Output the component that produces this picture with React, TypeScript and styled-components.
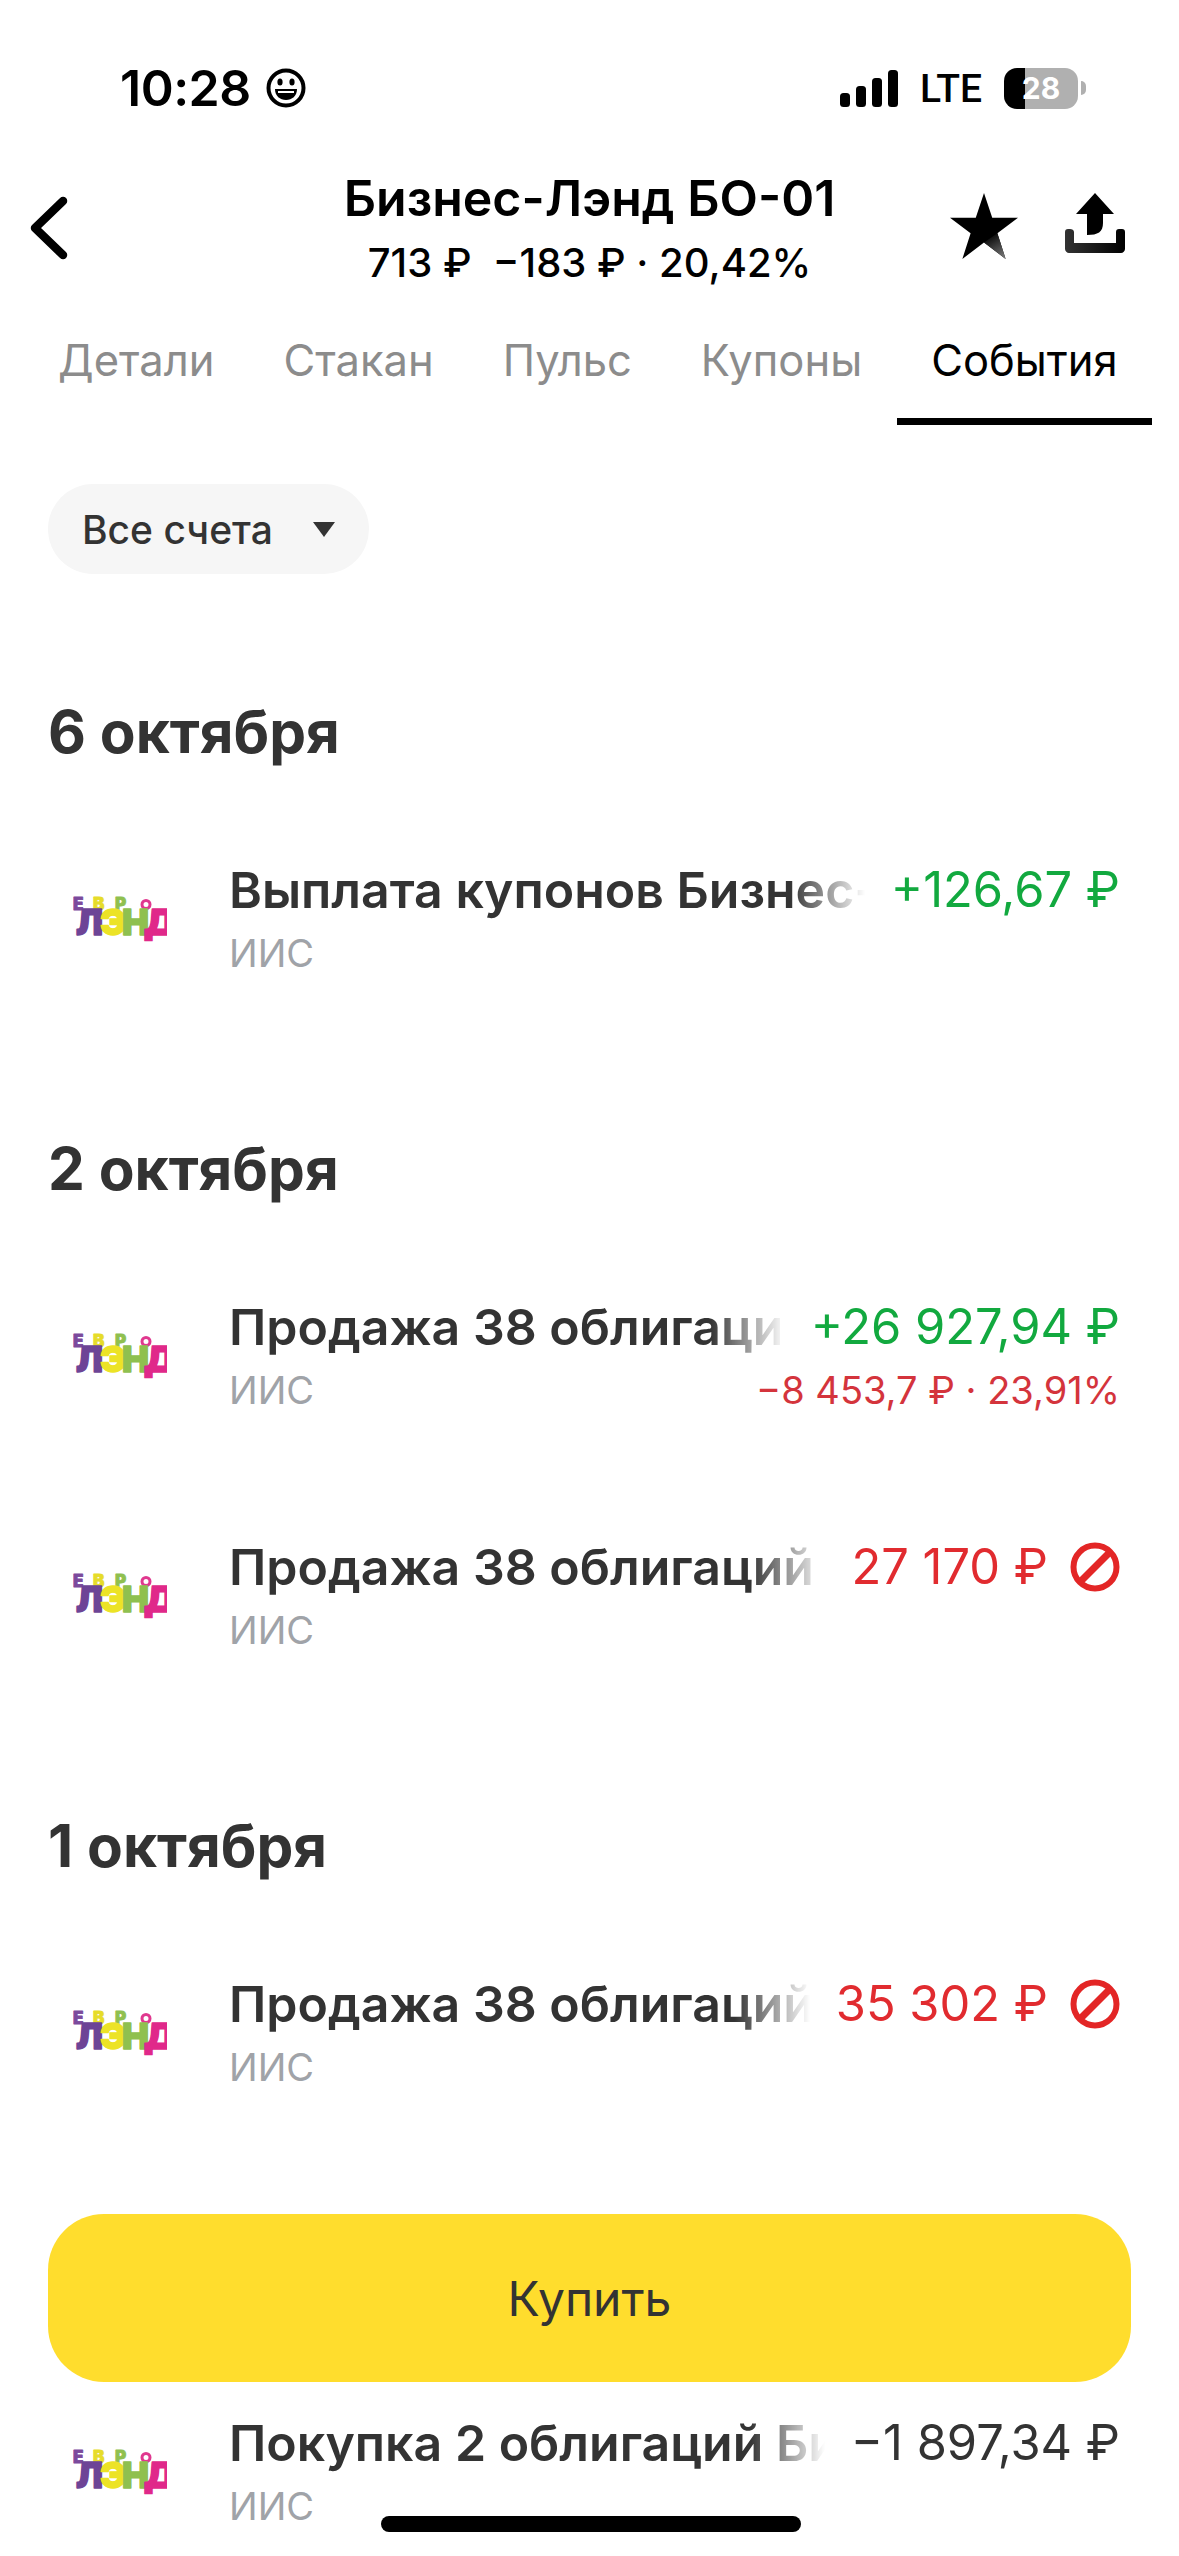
import styled, { createGlobalStyle } from "styled-components";

const GlobalStyle = createGlobalStyle`
  html, body {
    margin: 0;
    padding: 0;
    background: #fff;
  }
  body {
    font-family: Inter, "Noto Sans", "Liberation Sans", sans-serif;
    color: #333;
  }
`;

const Page = styled.div`
  position: relative;
  width: 1179px;
  height: 2556px;
  overflow: hidden;
  background: #fff;
`;

const StatusBar = styled.div`
  display: flex;
  justify-content: space-between;
  align-items: center;
  height: 56px;
  padding: 60px 93px 44px 120px;
  color: #000;
`;

const StatusLeft = styled.div`
  display: flex;
  align-items: center;
  gap: 15px;
`;

const Time = styled.span`
  font-size: 50px;
  line-height: 56px;
  font-weight: 600;
  letter-spacing: -0.5px;
`;

const StatusRight = styled.div`
  display: flex;
  align-items: center;
`;

const Lte = styled.span`
  margin: 2px 22px 0 22px;
  font-family: "Roboto", Inter, sans-serif;
  font-size: 39px;
  line-height: 56px;
  font-weight: 500;
`;

const Battery = styled.div`
  position: relative;
  width: 74px;
  height: 41px;
  border-radius: 13px;
  overflow: hidden;
  background: linear-gradient(to right, #000 0 28%, #b0b0b0 28% 100%);
  color: #fff;
  font-size: 30px;
  line-height: 41px;
  font-weight: 700;
  text-align: center;
`;

const BatteryTip = styled.div`
  width: 5px;
  height: 14px;
  margin-left: 3px;
  border-radius: 0 7px 7px 0;
  background: #b0b0b0;
`;

const Header = styled.header`
  display: grid;
  grid-template-columns: 1fr auto 1fr;
  height: 170px;
  color: #000;
`;

const BackSlot = styled.div`
  padding: 36px 0 0 27px;
`;

const TitleBlock = styled.div`
  display: flex;
  flex-direction: column;
  align-items: center;
  padding-top: 6px;
`;

const Title = styled.div`
  font-size: 50px;
  line-height: 64px;
  font-weight: 600;
  white-space: nowrap;
`;

const Subtitle = styled.div`
  margin-top: 8px;
  font-size: 40px;
  line-height: 50px;
  font-weight: 500;
  white-space: pre;
`;

const HeaderActions = styled.div`
  display: flex;
  justify-content: flex-end;
  gap: 47px;
  padding: 33px 54px 0 0;
`;

const Tabs = styled.nav`
  display: flex;
  padding-left: 23.5px;
`;

const Tab = styled.div<{ $active?: boolean }>`
  padding: 0 34.5px 28px;
  font-size: 43.5px;
  line-height: 60px;
  white-space: nowrap;
  color: ${(p) => (p.$active ? "#000" : "#8c8c8c")};
  border-bottom: 7px solid ${(p) => (p.$active ? "#000" : "transparent")};
`;

const FilterPill = styled.div`
  display: inline-flex;
  align-items: center;
  gap: 40px;
  height: 90px;
  margin: 59px 0 0 48px;
  padding: 0 34px;
  border-radius: 45px;
  background: #f6f6f6;
  font-size: 39px;
  font-weight: 500;
`;

const Caret = styled.span`
  width: 0;
  height: 0;
  border-left: 11px solid transparent;
  border-right: 11px solid transparent;
  border-top: 15px solid #333;
`;

const Section = styled.section<{ $top: number }>`
  padding-top: ${(p) => p.$top}px;
`;

const DateHeading = styled.h2`
  margin: 0 0 94px 48px;
  font-size: 58.5px;
  line-height: 68px;
  font-weight: 700;
  color: #333;
`;

const Row = styled.div`
  display: flex;
  height: 240px;
  padding: 0 59px 0 73px;
  box-sizing: border-box;
`;

const LogoSlot = styled.div`
  flex: none;
  width: 94px;
  margin-right: 62px;
  padding-top: 32px;
`;

const RowBody = styled.div`
  flex: 1;
  min-width: 0;
`;

const TopLine = styled.div`
  display: flex;
  align-items: center;
  gap: 26px;
  height: 60px;
`;

const RowTitle = styled.div`
  flex: 1;
  min-width: 0;
  overflow: hidden;
  white-space: nowrap;
  font-size: 50px;
  line-height: 60px;
  font-weight: 600;
  color: #333;
  mask-image: linear-gradient(to right, #000 calc(100% - 75px), transparent);
`;

const Amount = styled.div<{ $color: string }>`
  flex: none;
  display: flex;
  align-items: center;
  gap: 22px;
  font-size: 48.8px;
  line-height: 60px;
  white-space: nowrap;
  color: ${(p) => p.$color};
`;

const BottomLine = styled.div`
  display: flex;
  justify-content: space-between;
  align-items: center;
  height: 50px;
  margin-top: 8px;
`;

const Account = styled.span`
  font-size: 38px;
  line-height: 50px;
  color: #a0a3a8;
`;

const SubAmount = styled.span`
  font-size: 38px;
  line-height: 50px;
  white-space: nowrap;
  color: #d4343c;
`;

const BuyButton = styled.button`
  position: absolute;
  left: 48px;
  top: 2214px;
  width: 1083px;
  height: 168px;
  border: 0;
  border-radius: 56px;
  background: #ffdd2d;
  font: 400 48px Inter, sans-serif;
  color: #333;
`;

const HomeIndicator = styled.div`
  position: absolute;
  left: 381px;
  bottom: 24px;
  width: 420px;
  height: 16px;
  border-radius: 8px;
  background: #000;
`;

const Smiley = () => (
  <svg width="40" height="40" viewBox="0 0 40 40">
    <circle cx="20" cy="20" r="17.5" fill="none" stroke="#000" strokeWidth="4" />
    <ellipse cx="14" cy="14" rx="2.6" ry="3.6" fill="#000" />
    <ellipse cx="26" cy="14" rx="2.6" ry="3.6" fill="#000" />
    <path d="M9 21h22c0 7-5 11-11 11S9 28 9 21z" fill="#000" />
    <path d="M12 23h16v2H12z" fill="#fff" />
  </svg>
);

const SignalBars = () => (
  <svg width="58" height="37" viewBox="0 0 58 37" fill="#000">
    <rect x="0" y="23" width="10" height="14" rx="3.5" />
    <rect x="16" y="16" width="10" height="21" rx="3.5" />
    <rect x="32" y="8" width="10" height="29" rx="3.5" />
    <rect x="48" y="0" width="10" height="37" rx="3.5" />
  </svg>
);

const BackIcon = () => (
  <svg width="44" height="64" viewBox="0 0 44 64">
    <path d="M36 5 8 32l28 27" fill="none" stroke="#000" strokeWidth="8.5" strokeLinecap="round" strokeLinejoin="round" />
  </svg>
);

const StarIcon = () => (
  <svg width="68" height="66" viewBox="0 0 66 64">
    <defs>
      <linearGradient id="starShade" x1="0.3" y1="0" x2="0.8" y2="1">
        <stop offset="0" stopColor="#000" />
        <stop offset="1" stopColor="#777" />
      </linearGradient>
    </defs>
    <path d="M33 0l8 24h25L46 39l8 25-21-16-21 16 8-25L0 24h25z" fill="#000" />
    <path d="M46 39l8 25-21-16z" fill="url(#starShade)" />
  </svg>
);

const ShareIcon = () => (
  <svg width="60" height="60" viewBox="0 0 60 60">
    <defs>
      <linearGradient id="trayShade" x1="0" y1="0" x2="1" y2="0">
        <stop offset="0" stopColor="#333" />
        <stop offset="1" stopColor="#000" />
      </linearGradient>
    </defs>
    <path d="M30 0l19 21H38v9c0 9-5 12-16 12V21H11z" fill="#000" />
    <path d="M0 39c0-2 1-3 3-3h2c2 0 4 1 4 3v11h42V39c0-2 1-3 3-3h3c2 0 3 1 3 3v17c0 2-2 4-4 4H4c-2 0-4-2-4-4z" fill="url(#trayShade)" />
  </svg>
);

const BanIcon = () => (
  <svg width="50" height="50" viewBox="0 0 50 50" fill="none" stroke="#e32626" strokeWidth="6">
    <circle cx="25" cy="25" r="21.5" />
    <path d="M10 40 40 10" strokeWidth="7" />
  </svg>
);

const logoLetter = {
  fontFamily: "Inter, sans-serif",
  fontWeight: 900,
  lengthAdjust: "spacingAndGlyphs",
  strokeLinejoin: "round",
} as const;

// Евро-Лэнд logo, letters kept as text
const BrandLogo = () => (
  <svg width="94" height="54" viewBox="0 -6 94 54">
    <g fontSize="17" strokeWidth="0.8" {...logoLetter}>
      <text x="0" y="12" fill="#7b4a9c" stroke="#7b4a9c" textLength="9">Е</text>
      <text x="20" y="12" fill="#e6dc2a" stroke="#e6dc2a" textLength="9">В</text>
      <text x="42" y="12" fill="#8fc04f" stroke="#8fc04f" textLength="9">Р</text>
    </g>
    <circle cx="73" cy="6.5" r="4" fill="none" stroke="#e0388f" strokeWidth="3" />
    <g fontSize="36" strokeWidth="1.4" {...logoLetter}>
      <text x="3" y="36.5" fill="#6d4496" stroke="#6d4496" textLength="18">Л</text>
      <text x="27" y="36.5" fill="#ece326" stroke="#ece326" textLength="17">Э</text>
      <text x="49" y="36.5" fill="#8fc04f" stroke="#8fc04f" textLength="17">Н</text>
      <text x="71" y="36.5" fill="#e0288a" stroke="#e0288a" textLength="22">Д</text>
    </g>
  </svg>
);

const GREEN = "#12a93f";
const RED = "#e12b2f";
const DARK = "#333";

type EventItem = {
  title: string;
  amount: string;
  color: string;
  sub?: string;
  cancelled?: boolean;
};

const EventRow = ({ item }: { item: EventItem }) => (
  <Row>
    <LogoSlot>
      <BrandLogo />
    </LogoSlot>
    <RowBody>
      <TopLine>
        <RowTitle>{item.title}</RowTitle>
        <Amount $color={item.color}>
          {item.amount}
          {item.cancelled && <BanIcon />}
        </Amount>
      </TopLine>
      <BottomLine>
        <Account>ИИС</Account>
        {item.sub && <SubAmount>{item.sub}</SubAmount>}
      </BottomLine>
    </RowBody>
  </Row>
);

export default function App() {
  return (
    <Page>
      <GlobalStyle />
      <StatusBar>
        <StatusLeft>
          <Time>10:28</Time>
          <Smiley />
        </StatusLeft>
        <StatusRight>
          <SignalBars />
          <Lte>LTE</Lte>
          <Battery>28</Battery>
          <BatteryTip />
        </StatusRight>
      </StatusBar>

      <Header>
        <BackSlot>
          <BackIcon />
        </BackSlot>
        <TitleBlock>
          <Title>Бизнес-Лэнд БО-01</Title>
          <Subtitle>713 ₽  −183 ₽ · 20,42%</Subtitle>
        </TitleBlock>
        <HeaderActions>
          <StarIcon />
          <ShareIcon />
        </HeaderActions>
      </Header>

      <Tabs>
        <Tab>Детали</Tab>
        <Tab>Стакан</Tab>
        <Tab>Пульс</Tab>
        <Tab>Купоны</Tab>
        <Tab $active>События</Tab>
      </Tabs>

      <FilterPill>
        Все счета
        <Caret />
      </FilterPill>

      <Section $top={124}>
        <DateHeading>6 октября</DateHeading>
        <EventRow item={{ title: "Выплата купонов Бизнес-Лэнд БО-01", amount: "+126,67 ₽", color: GREEN }} />
      </Section>

      <Section $top={35}>
        <DateHeading>2 октября</DateHeading>
        <EventRow
          item={{
            title: "Продажа 38 облигаций Бизнес-Лэнд БО-01",
            amount: "+26 927,94 ₽",
            color: GREEN,
            sub: "−8 453,7 ₽ · 23,91%",
          }}
        />
        <EventRow item={{ title: "Продажа 38 облигаций", amount: "27 170 ₽", color: RED, cancelled: true }} />
      </Section>

      <Section $top={35}>
        <DateHeading>1 октября</DateHeading>
        <EventRow item={{ title: "Продажа 38 облигаций", amount: "35 302 ₽", color: RED, cancelled: true }} />
      </Section>

      <Section $top={199}>
        <EventRow item={{ title: "Покупка 2 облигаций Бизнес-Лэнд БО-01", amount: "−1 897,34 ₽", color: DARK }} />
      </Section>

      <BuyButton>Купить</BuyButton>
      <HomeIndicator />
    </Page>
  );
}
